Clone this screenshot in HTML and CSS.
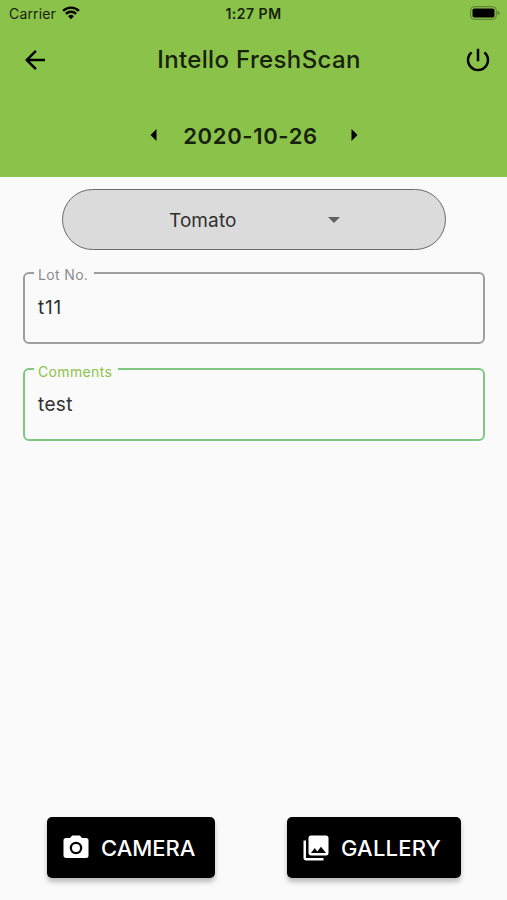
FILE: index.html
```html
<!DOCTYPE html>
<html lang="en">
<head>
<meta charset="utf-8">
<title>Intello FreshScan</title>
<link rel="stylesheet" href="styles.css">
</head>
<body>
<header class="header">
  <div class="status">
    <div class="carrier"><span class="carrier-name">Carrier</span>
      <svg class="wifi" viewBox="0 0 18 14"><path d="M9 13.2 6.1 10.3a4.1 4.1 0 0 1 5.8 0z"/><path class="arc" d="M3.9 7.9a7.2 7.2 0 0 1 10.2 0M1.1 4.9a11.2 11.2 0 0 1 15.8 0"/></svg>
    </div>
    <span class="time">1:27 PM</span>
    <svg class="battery" viewBox="0 0 30 14"><rect class="shell" x=".7" y=".7" width="25.6" height="12.6" rx="3.5"/><rect x="2.5" y="2.5" width="22" height="9" rx="1.8"/><path class="tip" d="M27.7 4.7q2 .7 2 2.3t-2 2.3z"/></svg>
  </div>
  <div class="appbar">
    <svg class="icon" viewBox="0 0 24 24"><path d="M20 11H7.83l5.59-5.59L12 4l-8 8 8 8 1.41-1.41L7.83 13H20z"/></svg>
    <h1 class="title">Intello FreshScan</h1>
    <svg class="icon" viewBox="0 0 24 24"><path d="M13 3h-2v10h2zm4.83 2.17-1.42 1.42A6.92 6.92 0 0 1 19 12a7 7 0 1 1-11.42-5.42L6.17 5.17A8.93 8.93 0 0 0 3 12a9 9 0 0 0 18 0c0-2.74-1.23-5.18-3.17-6.83z"/></svg>
  </div>
  <div class="datebar">
    <svg class="step" viewBox="0 0 7 12"><path d="M6.5 0v12L.5 6z"/></svg>
    <span class="date">2020-10-26</span>
    <svg class="step" viewBox="0 0 7 12"><path d="M.5 0v12l6-6z"/></svg>
  </div>
</header>
<main class="content">
  <div class="select">
    <span class="select-value">Tomato</span>
    <svg class="caret" viewBox="0 0 12 6"><path d="M0 0h12L6 6z"/></svg>
  </div>
  <fieldset class="field lot">
    <legend class="label">Lot No.</legend>
    <div class="value">t11</div>
  </fieldset>
  <fieldset class="field comments">
    <legend class="label">Comments</legend>
    <div class="value">test</div>
  </fieldset>
</main>
<footer class="actions">
  <button class="button camera">
    <svg class="icon" viewBox="0 0 24 24"><circle cx="12" cy="12" r="3.2"/><path d="M9 2 7.17 4H4a2 2 0 0 0-2 2v12c0 1.1.9 2 2 2h16a2 2 0 0 0 2-2V6a2 2 0 0 0-2-2h-3.17L15 2zm3 15a5 5 0 1 1 0-10 5 5 0 0 1 0 10z"/></svg>
    <span class="camera-text">CAMERA</span>
  </button>
  <button class="button gallery">
    <svg class="icon" viewBox="0 0 24 24"><path d="M22 16V4a2 2 0 0 0-2-2H8a2 2 0 0 0-2 2v12c0 1.1.9 2 2 2h12a2 2 0 0 0 2-2zm-11-4 2.03 2.71L16 11l4 5H8zM2 6v14c0 1.1.9 2 2 2h14v-2H4V6z"/></svg>
    <span class="gallery-text">GALLERY</span>
  </button>
</footer>
</body>
</html>
```
FILE: styles.css
```css
* { box-sizing: border-box; }
body {
  margin: 0;
  height: 900px;
  display: flex;
  flex-direction: column;
  overflow: hidden;
  background: #fafafa;
  color: #303030;
  font-family: Inter, "Liberation Sans", sans-serif;
}
svg { display: block; flex: none; }
.header {
  height: 177px;
  flex: none;
  background: #8bc34a;
  color: #17210b;
}
.status {
  height: 27px;
  padding: 0 7px 0 9px;
  display: grid;
  grid-template-columns: 1fr auto 1fr;
  align-items: center;
}
.carrier { display: flex; align-items: center; gap: 6px; font-size: 14px; letter-spacing: .15px; }
.wifi { width: 18px; height: 14px; margin-top: -1px; fill: #000; }
.arc { fill: none; stroke: #000; stroke-width: 2.4; }
.time { margin-right: 2px; font-size: 14px; font-weight: 600; letter-spacing: .5px; }
.battery { width: 30px; height: 14px; justify-self: end; margin-top: -1px; }
.shell { fill: none; stroke: #58792f; stroke-width: 1; }
.tip { fill: #58792f; }
.appbar {
  height: 65px;
  padding: 0 14px 0 20px;
  display: flex;
  align-items: center;
  justify-content: space-between;
}
.icon { width: 30px; height: 30px; fill: currentColor; }
.appbar .icon { fill: #000; }
.title { margin: 0 0 0 5px; font-size: 24px; font-weight: 450; letter-spacing: .35px; white-space: nowrap; }
.datebar {
  height: 87px;
  display: flex;
  align-items: center;
  justify-content: center;
  gap: 30px;
}
.step { width: 7px; height: 12px; margin-top: -1px; fill: #000; }
.date { margin: 0 3px 0 -4px; font-size: 22px; font-weight: 600; letter-spacing: .65px; }
.datebar { padding-left: 1px; }
.content { flex: 1; padding: 12px 22px 0 23px; }
.select {
  width: 384px;
  height: 61px;
  margin: 0 auto 13px 39px;
  padding-left: 106px;
  display: flex;
  align-items: center;
  border: 1.5px solid #6b6b6b;
  border-radius: 31px;
  background: #dbdbdb;
}
.select-value { width: 159px; padding-top: 1px; font-size: 19px; letter-spacing: .1px; }
.caret { width: 12px; height: 6px; fill: #616161; }
.field {
  height: 81px;
  min-width: 0;
  margin: 0 0 15px;
  padding: 0 9px;
  border: 2px solid #9e9e9e;
  border-radius: 6px;
}
.label {
  height: 20px;
  padding: 4px 6px 0 4px;
  font-size: 14px;
  line-height: 16px;
  letter-spacing: .35px;
  color: #8c8c8c;
}
.comments { height: 82px; border-color: #81c784; }
.comments .label { padding-top: 5px; color: #8bc34a; }
.value { padding: 11px 4px 0; font-size: 19px; line-height: 28px; letter-spacing: .35px; }
.lot .value { letter-spacing: .8px; }
.comments .value { padding-top: 12px; }
.actions {
  height: 83px;
  flex: none;
  padding: 0 46px 0 47px;
  display: flex;
  justify-content: space-between;
}
.button {
  height: 61px;
  padding: 0 0 0 14px;
  display: flex;
  align-items: center;
  gap: 10px;
  border: 0;
  border-radius: 5px;
  background: #000;
  color: #fff;
  font: 500 22px Inter, "Liberation Sans", sans-serif;
  box-shadow: 0 4px 5px rgba(0, 0, 0, .25);
}
.camera { width: 168px; }
.gallery { width: 174px; }
.camera-text { letter-spacing: 0; }
.gallery-text { letter-spacing: .2px; }
```
